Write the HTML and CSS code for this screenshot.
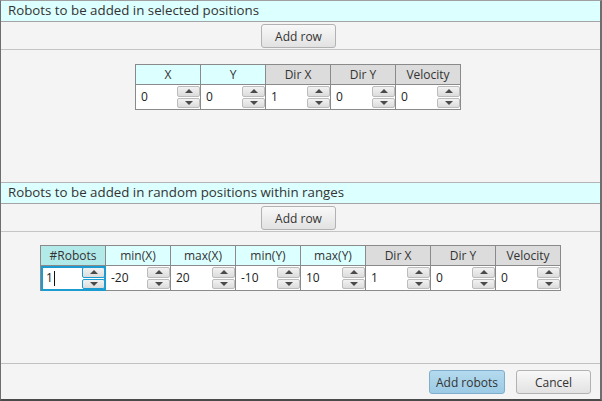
FILE: index.html
```html
<!DOCTYPE html>
<html>
<head>
<meta charset="utf-8">
<link rel="stylesheet" href="styles.css">
</head>
<body>
<div class="window">
  <section class="section first">
    <div class="title">Robots to be added in selected positions</div>
    <div class="toolbar"><button class="btn">Add row</button></div>
    <div class="table-area a1">
      <table class="grid">
        <tr>
          <th class="key">X</th><th class="key">Y</th><th>Dir X</th><th>Dir Y</th><th>Velocity</th>
        </tr>
        <tr>
          <td><div class="spin"><span class="val">0</span><span class="arrows"><span class="up"></span><span class="down"></span></span></div></td>
          <td><div class="spin"><span class="val">0</span><span class="arrows"><span class="up"></span><span class="down"></span></span></div></td>
          <td><div class="spin"><span class="val">1</span><span class="arrows"><span class="up"></span><span class="down"></span></span></div></td>
          <td><div class="spin"><span class="val">0</span><span class="arrows"><span class="up"></span><span class="down"></span></span></div></td>
          <td><div class="spin"><span class="val">0</span><span class="arrows"><span class="up"></span><span class="down"></span></span></div></td>
        </tr>
      </table>
    </div>
  </section>
  <section class="section second">
    <div class="title">Robots to be added in random positions within ranges</div>
    <div class="toolbar"><button class="btn">Add row</button></div>
    <div class="table-area a2">
      <table class="grid">
        <tr>
          <th class="key sel">#Robots</th><th class="key">min(X)</th><th class="key">max(X)</th><th class="key">min(Y)</th><th class="key">max(Y)</th><th>Dir X</th><th>Dir Y</th><th>Velocity</th>
        </tr>
        <tr>
          <td class="focus"><div class="spin"><span class="val">1<span class="caret"></span></span><span class="arrows"><span class="up"></span><span class="down"></span></span></div></td>
          <td><div class="spin"><span class="val">-20</span><span class="arrows"><span class="up"></span><span class="down"></span></span></div></td>
          <td><div class="spin"><span class="val">20</span><span class="arrows"><span class="up"></span><span class="down"></span></span></div></td>
          <td><div class="spin"><span class="val">-10</span><span class="arrows"><span class="up"></span><span class="down"></span></span></div></td>
          <td><div class="spin"><span class="val">10</span><span class="arrows"><span class="up"></span><span class="down"></span></span></div></td>
          <td><div class="spin"><span class="val">1</span><span class="arrows"><span class="up"></span><span class="down"></span></span></div></td>
          <td><div class="spin"><span class="val">0</span><span class="arrows"><span class="up"></span><span class="down"></span></span></div></td>
          <td><div class="spin"><span class="val">0</span><span class="arrows"><span class="up"></span><span class="down"></span></span></div></td>
        </tr>
      </table>
    </div>
  </section>
  <div class="footer">
    <button class="btn primary">Add robots</button>
    <button class="btn">Cancel</button>
  </div>
</div>
</body>
</html>
```
FILE: styles.css
```css
html, body {
  margin: 0;
  padding: 0;
}
body {
  width: 602px;
  height: 401px;
  overflow: hidden;
  background: #f4f4f4;
  font-family: "Open Sans", "Noto Sans", "DejaVu Sans", sans-serif;
  font-size: 12px;
  color: #333;
}
.window {
  box-sizing: border-box;
  width: 602px;
  height: 401px;
  display: flex;
  flex-direction: column;
  background: #f4f4f4;
  border-top: 1px solid #a0a0a0;
  border-left: 1px solid #6e6e6e;
  border-right: 2px solid #6e6e6e;
  border-bottom: 2px solid #4a4a4a;
}
.section {
  display: flex;
  flex-direction: column;
}
.second {
  border-top: 1px solid #b4b4b4;
}
.title {
  box-sizing: border-box;
  height: 21px;
  line-height: 19px;
  padding-left: 7px;
  background: #dcffff;
  border-bottom: 1px solid #a4a4a4;
  font-size: 13.3px;
  color: #333;
  white-space: nowrap;
}
.toolbar {
  box-sizing: border-box;
  height: 28px;
  display: flex;
  justify-content: center;
  align-items: flex-start;
  padding-top: 2px;
  border-bottom: 1px solid #c4c4c4;
}
.btn {
  box-sizing: border-box;
  height: 24px;
  width: 75px;
  padding: 0;
  font-family: inherit;
  font-size: 12px;
  color: #333;
  background: linear-gradient(#f8f8f8, #e2e2e2);
  border: 1px solid #b2b2b2;
  border-radius: 3px;
}
.toolbar .btn {
  margin-left: -4px;
}
.table-area {
  box-sizing: border-box;
  display: flex;
  justify-content: center;
  align-items: flex-start;
}
.a1 {
  height: 132px;
  padding-top: 14px;
  padding-right: 5px;
}
.a2 {
  height: 132px;
  padding-top: 13px;
  border-bottom: 1px solid #c0c0c0;
}
.grid {
  border-collapse: collapse;
  border: 1px solid #7c7c7c;
}
.grid th {
  box-sizing: border-box;
  width: 65px;
  height: 20px;
  padding: 0;
  font-weight: normal;
  font-size: 12px;
  color: #333;
  background: #dcdcdc;
  border: 1px solid #8a8a8a;
  text-align: center;
}
.grid th.key {
  background: #dcffff;
}
.grid th.sel {
  background: #b2eaea;
}
.grid td {
  box-sizing: border-box;
  height: 25px;
  padding: 0;
  background: #fff;
  border: 1px solid #8a8a8a;
}
.spin {
  display: flex;
  height: 24px;
  align-items: stretch;
}
.val {
  flex: 1;
  padding-left: 5px;
  line-height: 24px;
  font-size: 12px;
  color: #222;
  display: flex;
  align-items: center;
}
.caret {
  display: inline-block;
  width: 1px;
  height: 15px;
  background: #111;
  margin-left: 1px;
}
.arrows {
  width: 23px;
  display: flex;
  flex-direction: column;
  gap: 1px;
  padding: 1px 0;
  box-sizing: border-box;
}
.up, .down {
  flex: 1;
  position: relative;
  background: linear-gradient(#f2f2f2, #dcdcdc);
  border: 1px solid #bcbcbc;
  border-radius: 2px;
}
.up::after, .down::after {
  content: "";
  position: absolute;
  left: 50%;
  top: 50%;
  margin-left: -4px;
  border-left: 4px solid transparent;
  border-right: 4px solid transparent;
}
.up::after {
  margin-top: -2px;
  border-bottom: 4px solid #4a4a4a;
}
.down::after {
  margin-top: -2px;
  border-top: 4px solid #4a4a4a;
}
.focus {
  outline: 2px solid #1b9bd0;
  outline-offset: -2px;
}
.focus .up, .focus .down {
  border-color: #1b9bd0;
}
.footer {
  flex: 1;
  display: flex;
  justify-content: flex-end;
  align-items: flex-start;
  gap: 11px;
  padding: 6px 9px 0 0;
}
.btn.primary {
  width: 76px;
  background: linear-gradient(#b4daee, #9ccbe5);
  border-color: #7eaecb;
}
```
